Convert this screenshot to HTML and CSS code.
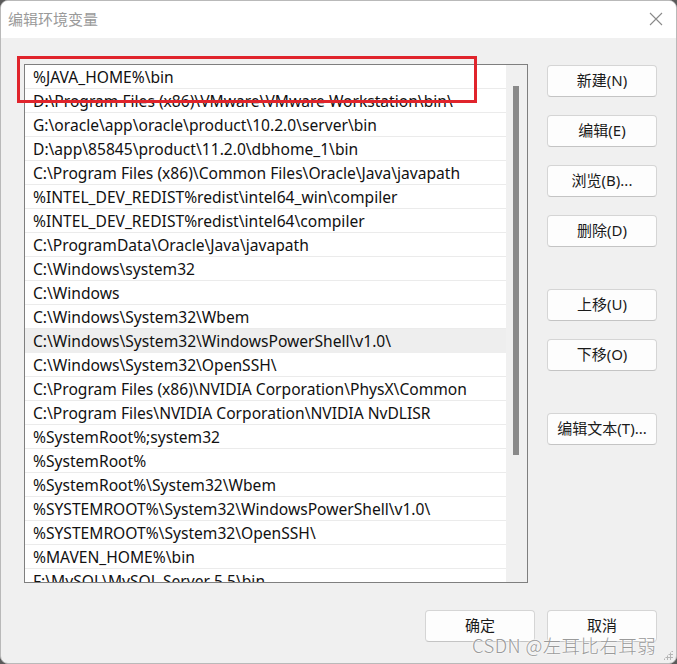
FILE: index.html
```html
<!DOCTYPE html>
<html lang="zh-CN">
<head>
<meta charset="utf-8">
<title>编辑环境变量</title>
<link rel="stylesheet" href="styles.css">
</head>
<body>
<div class="window">
  <div class="titlebar">
    <span class="title">编辑环境变量</span>
    <svg class="close" width="14" height="14" viewBox="0 0 14 14"><path d="M1 1L13 13M13 1L1 13" stroke="#8a8a8a" stroke-width="1.1" fill="none"/></svg>
  </div>
  <div class="content">
    <div class="main">
      <div class="listwrap">
        <div class="listbox">
          <div class="rows">
            <div class="row">%JAVA_HOME%\bin</div>
            <div class="row">D:\Program Files (x86)\VMware\VMware Workstation\bin\</div>
            <div class="row">G:\oracle\app\oracle\product\10.2.0\server\bin</div>
            <div class="row">D:\app\85845\product\11.2.0\dbhome_1\bin</div>
            <div class="row">C:\Program Files (x86)\Common Files\Oracle\Java\javapath</div>
            <div class="row">%INTEL_DEV_REDIST%redist\intel64_win\compiler</div>
            <div class="row">%INTEL_DEV_REDIST%redist\intel64\compiler</div>
            <div class="row">C:\ProgramData\Oracle\Java\javapath</div>
            <div class="row">C:\Windows\system32</div>
            <div class="row">C:\Windows</div>
            <div class="row">C:\Windows\System32\Wbem</div>
            <div class="row hover">C:\Windows\System32\WindowsPowerShell\v1.0\</div>
            <div class="row">C:\Windows\System32\OpenSSH\</div>
            <div class="row">C:\Program Files (x86)\NVIDIA Corporation\PhysX\Common</div>
            <div class="row">C:\Program Files\NVIDIA Corporation\NVIDIA NvDLISR</div>
            <div class="row">%SystemRoot%;system32</div>
            <div class="row">%SystemRoot%</div>
            <div class="row">%SystemRoot%\System32\Wbem</div>
            <div class="row">%SYSTEMROOT%\System32\WindowsPowerShell\v1.0\</div>
            <div class="row">%SYSTEMROOT%\System32\OpenSSH\</div>
            <div class="row">%MAVEN_HOME%\bin</div>
            <div class="row">F:\MySQL\MySQL Server 5.5\bin</div>
          </div>
          <div class="scrollbar"><div class="thumb"></div></div>
        </div>
        <div class="highlight"></div>
      </div>
      <div class="buttons">
        <button class="btn">新建(N)</button>
        <button class="btn gap-s">编辑(E)</button>
        <button class="btn gap-s">浏览(B)...</button>
        <button class="btn gap-s">删除(D)</button>
        <button class="btn gap-l">上移(U)</button>
        <button class="btn gap-s">下移(O)</button>
        <button class="btn gap-l">编辑文本(T)...</button>
      </div>
    </div>
    <div class="footer">
      <button class="btn">确定</button>
      <button class="btn">取消</button>
    </div>
  </div>
  <div class="watermark">CSDN @左耳比右耳弱</div>
  <div class="grip"></div>
</div>
</body>
</html>
```
FILE: styles.css
```css
* { box-sizing: border-box; }
html, body { margin: 0; padding: 0; background: #5a5a5a; }
body { width: 677px; height: 664px; overflow: hidden; }
.window {
  position: relative;
  width: 677px;
  height: 664px;
  background: #f0f0f0;
  border: 1px solid #b9b9b9;
  border-radius: 8px;
  overflow: hidden;
  font-family: "Noto Sans", "Noto Sans CJK SC", sans-serif;
}
.titlebar {
  height: 37px;
  background: #ffffff;
  display: flex;
  align-items: center;
  justify-content: space-between;
  padding: 0 13px 0 7px;
}
.title {
  font-family: "Noto Sans CJK SC", sans-serif;
  font-size: 15px;
  color: #9a9a9a;
  margin-top: -2px;
}
.close { display: block; margin-top: -2px; }
.content { padding: 26px 19px 0 23px; }
.main { display: flex; gap: 19px; align-items: flex-start; }
.listwrap { position: relative; }
.listbox {
  width: 504px;
  height: 519px;
  border: 1px solid #7f7f7f;
  background: #ffffff;
  display: flex;
  overflow: hidden;
}
.rows { width: 481px; }
.row {
  height: 24px;
  line-height: 25px;
  border-bottom: 1px solid #ebebeb;
  padding-left: 8px;
  font-size: 15.6px;
  color: #111;
  white-space: nowrap;
  overflow: hidden;
}
.row.hover { background: #eeeeee; border-bottom-color: #eeeeee; }
.scrollbar {
  width: 21px;
  background: #f0f0f0;
  padding: 21px 0 0 7px;
}
.thumb { width: 6px; height: 369px; background: #8a8a8a; }
.highlight {
  position: absolute;
  left: -7px;
  top: -8px;
  width: 460px;
  height: 47px;
  border: 3px solid #e0242c;
}
.buttons {
  display: flex;
  flex-direction: column;
  padding-top: 1px;
}
.btn {
  width: 110px;
  height: 32px;
  background: #fdfdfd;
  border: 1px solid #d5d5d5;
  border-bottom-color: #c4c4c4;
  border-radius: 4px;
  font-family: "Noto Sans", "Noto Sans CJK SC", sans-serif;
  font-size: 15px;
  color: #1a1a1a;
  padding: 0 0 3px 0;
}
.gap-s { margin-top: 18px; }
.gap-l { margin-top: 42px; }
.footer {
  display: flex;
  justify-content: flex-end;
  gap: 12px;
  margin-top: 27px;
}
.watermark {
  position: absolute;
  left: 471px;
  top: 631px;
  font-family: "Noto Sans CJK SC", sans-serif;
  font-size: 18.5px;
  font-weight: 300;
  color: #9a9a9a;
  text-shadow: 0 0 2px #fff, 0 0 2px #fff;
  white-space: nowrap;
  letter-spacing: 0.4px;
}
.grip {
  position: absolute;
  right: 3px;
  bottom: 3px;
  width: 10px;
  height: 10px;
  background: radial-gradient(circle, #b5b5b5 1px, transparent 1.2px) 0 0 / 3px 3px;
  clip-path: polygon(100% 0, 100% 100%, 0 100%);
}
```
